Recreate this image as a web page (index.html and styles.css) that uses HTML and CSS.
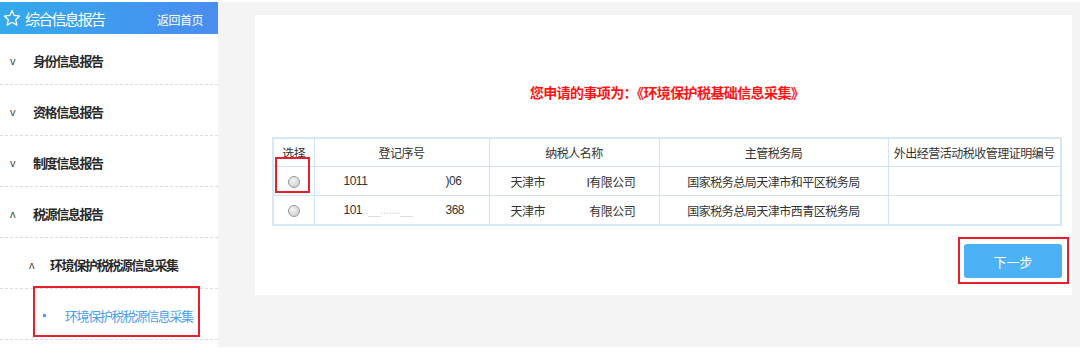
FILE: index.html
```html
<!DOCTYPE html>
<html lang="zh-CN">
<head>
    <meta charset="UTF-8">
    <meta name="viewport" content="width=device-width, initial-scale=1.0">
    <title>综合信息报告</title>
    <link rel="stylesheet" href="styles.css">
</head>
<body>

    <!-- 左侧菜单 -->
    <div class="sidebar">
        <div class="side-head">
            <span class="side-title">
                <svg class="star" viewBox="0 0 20 20" width="18" height="18">
                    <path d="M10 1.6 L12.5 7.2 L18.6 7.8 L14 11.9 L15.4 17.9 L10 14.8 L4.6 17.9 L6 11.9 L1.4 7.8 L7.5 7.2 Z" fill="none" stroke="#fff" stroke-width="1.4" stroke-linejoin="round"/>
                </svg>
                综合信息报告
            </span>
            <a class="back-home">返回首页</a>
        </div>
        <ul class="menu">
            <li><span class="arrow">v</span>身份信息报告</li>
            <li><span class="arrow">v</span>资格信息报告</li>
            <li><span class="arrow">v</span>制度信息报告</li>
            <li><span class="arrow">ʌ</span>税源信息报告</li>
            <li class="sub"><span class="arrow">ʌ</span>环境保护税税源信息采集</li>
            <li class="leaf marked"><span class="dot"></span>环境保护税税源信息采集</li>
        </ul>
    </div>

    <!-- 右侧内容 -->
    <div class="main">
        <div class="panel">
            <h3 class="title">您申请的事项为：《环境保护税基础信息采集》</h3>

            <table class="list">
                <colgroup>
                    <col class="c1"><col class="c2"><col class="c3"><col class="c4"><col class="c5">
                </colgroup>
                <tr>
                    <th>选择</th>
                    <th>登记序号</th>
                    <th>纳税人名称</th>
                    <th>主管税务局</th>
                    <th>外出经营活动税收管理证明编号</th>
                </tr>
                <tr>
                    <td><span class="radio marked"></span></td>
                    <td class="code"><span class="gap">1011</span>)06</td>
                    <td class="name"><span class="gap">天津市</span>I有限公司</td>
                    <td>国家税务总局天津市和平区税务局</td>
                    <td></td>
                </tr>
                <tr>
                    <td><span class="radio"></span></td>
                    <td class="code"><span class="gap">101<span class="faint">..__.......__</span></span>368</td>
                    <td class="name"><span class="gap">天津市</span>&nbsp;有限公司</td>
                    <td>国家税务总局天津市西青区税务局</td>
                    <td></td>
                </tr>
            </table>

            <div class="actions">
                <div class="btn-wrap marked">
                    <button class="next-btn">下一步</button>
                </div>
            </div>
        </div>
    </div>

</body>
</html>
```

FILE: styles.css
```css
/* 页面基础 */
body {
    margin: 0;
    padding-top: 2px;
    display: flex;
    align-items: flex-start;
    background: #fff;
    font-family: "Liberation Sans", "Noto Sans CJK SC", sans-serif;
    color: #333;
}

/* 左侧菜单 */
.sidebar {
    width: 218px;
    flex-shrink: 0;
}

.side-head {
    height: 32px;
    display: flex;
    align-items: center;
    justify-content: space-between;
    padding: 0 15px 0 3px;
    background: linear-gradient(to right, #34a9ec, #4b8df0);
    color: #fff;
}

.side-title {
    display: flex;
    align-items: center;
    font-size: 15px;
    letter-spacing: -1.8px;
}

.star {
    margin-right: 4px;
}

.back-home {
    font-size: 12px;
    letter-spacing: -0.5px;
    padding-top: 3px;
    cursor: pointer;
}

.menu {
    list-style: none;
    margin: 0;
    padding: 0;
}

.menu li {
    position: relative;
    height: 51px;
    box-sizing: border-box;
    padding: 3px 0 0 10px;
    display: flex;
    align-items: center;
    border-bottom: 1px dashed #dcdcdc;
    font-size: 13px;
    font-weight: 600;
    letter-spacing: -1.4px;
    color: #2a2a2a;
}

.menu .arrow {
    width: 23px;
    font-size: 11px;
    font-weight: normal;
    letter-spacing: 0;
    color: #444;
}

.menu li.sub {
    padding-left: 29px;
}

.menu li.sub .arrow {
    width: 21px;
}

.menu li.leaf {
    padding-left: 43px;
    font-weight: normal;
    color: #4a9ff0;
}

.dot {
    width: 3px;
    height: 3px;
    background: #4a9ff0;
    margin-right: 19px;
}

/* 红色标注框 */
.menu li.marked::after {
    content: "";
    position: absolute;
    left: 33px;
    top: -3px;
    width: 167px;
    height: 51px;
    border: 2px solid #e61f2a;
    box-sizing: border-box;
}

/* 右侧内容区 */
.main {
    flex: 1;
    height: 345px;
    box-sizing: border-box;
    padding: 13px 10px 0 37px;
    background: #f4f4f4;
}

.panel {
    height: 280px;
    box-sizing: border-box;
    padding: 0 10px 0 17px;
    background: #fff;
}

.title {
    margin: 0;
    padding-top: 68px;
    line-height: 20px;
    text-align: center;
    font-size: 14px;
    font-weight: bold;
    letter-spacing: -0.6px;
    color: #ff1414;
}

/* 表格 */
.list {
    margin-top: 34px;
    width: 100%;
    table-layout: fixed;
    border-collapse: collapse;
    border: 2px solid #d6e7f5;
    font-size: 12px;
    letter-spacing: -0.5px;
    color: #333;
}

.list th,
.list td {
    border: 1px solid #d2e4f3;
    padding: 0;
    text-align: center;
    font-weight: normal;
    white-space: nowrap;
}

.list th {
    height: 27px;
}

.list td {
    height: 28px;
}

.c1 { width: 41px; }
.c2 { width: 175px; }
.c3 { width: 170px; }
.c4 { width: 229px; }
.c5 { width: 173px; }

.list td.code {
    text-align: left;
    padding-left: 29px;
}

.list td.name {
    text-align: left;
    padding-left: 21px;
}

.code .gap {
    display: inline-block;
    width: 102px;
}

.name .gap {
    display: inline-block;
    width: 76px;
}

.faint {
    color: #d8d8d8;
}

.radio {
    position: relative;
    display: inline-block;
    width: 10px;
    height: 10px;
    margin-top: 2px;
    border: 1px solid #9a9a9a;
    border-radius: 50%;
    background: radial-gradient(circle at 40% 35%, #f4f4f4, #c9c9c9);
    vertical-align: middle;
}

.radio.marked::after {
    content: "";
    position: absolute;
    left: -14px;
    top: -20px;
    width: 35px;
    height: 36px;
    border: 2px solid #e61f2a;
    box-sizing: border-box;
}

/* 下一步按钮 */
.actions {
    display: flex;
    justify-content: flex-end;
    margin-top: 18px;
}

.btn-wrap {
    position: relative;
}

.btn-wrap.marked::after {
    content: "";
    position: absolute;
    left: -6px;
    right: -7px;
    top: -7px;
    bottom: -6px;
    border: 2px solid #e61f2a;
}

.next-btn {
    display: block;
    width: 98px;
    height: 34px;
    border: none;
    border-radius: 3px;
    background: #4db1f6;
    color: #fff;
    font-family: "Noto Sans CJK SC", sans-serif;
    font-size: 13px;
    cursor: pointer;
}
```
